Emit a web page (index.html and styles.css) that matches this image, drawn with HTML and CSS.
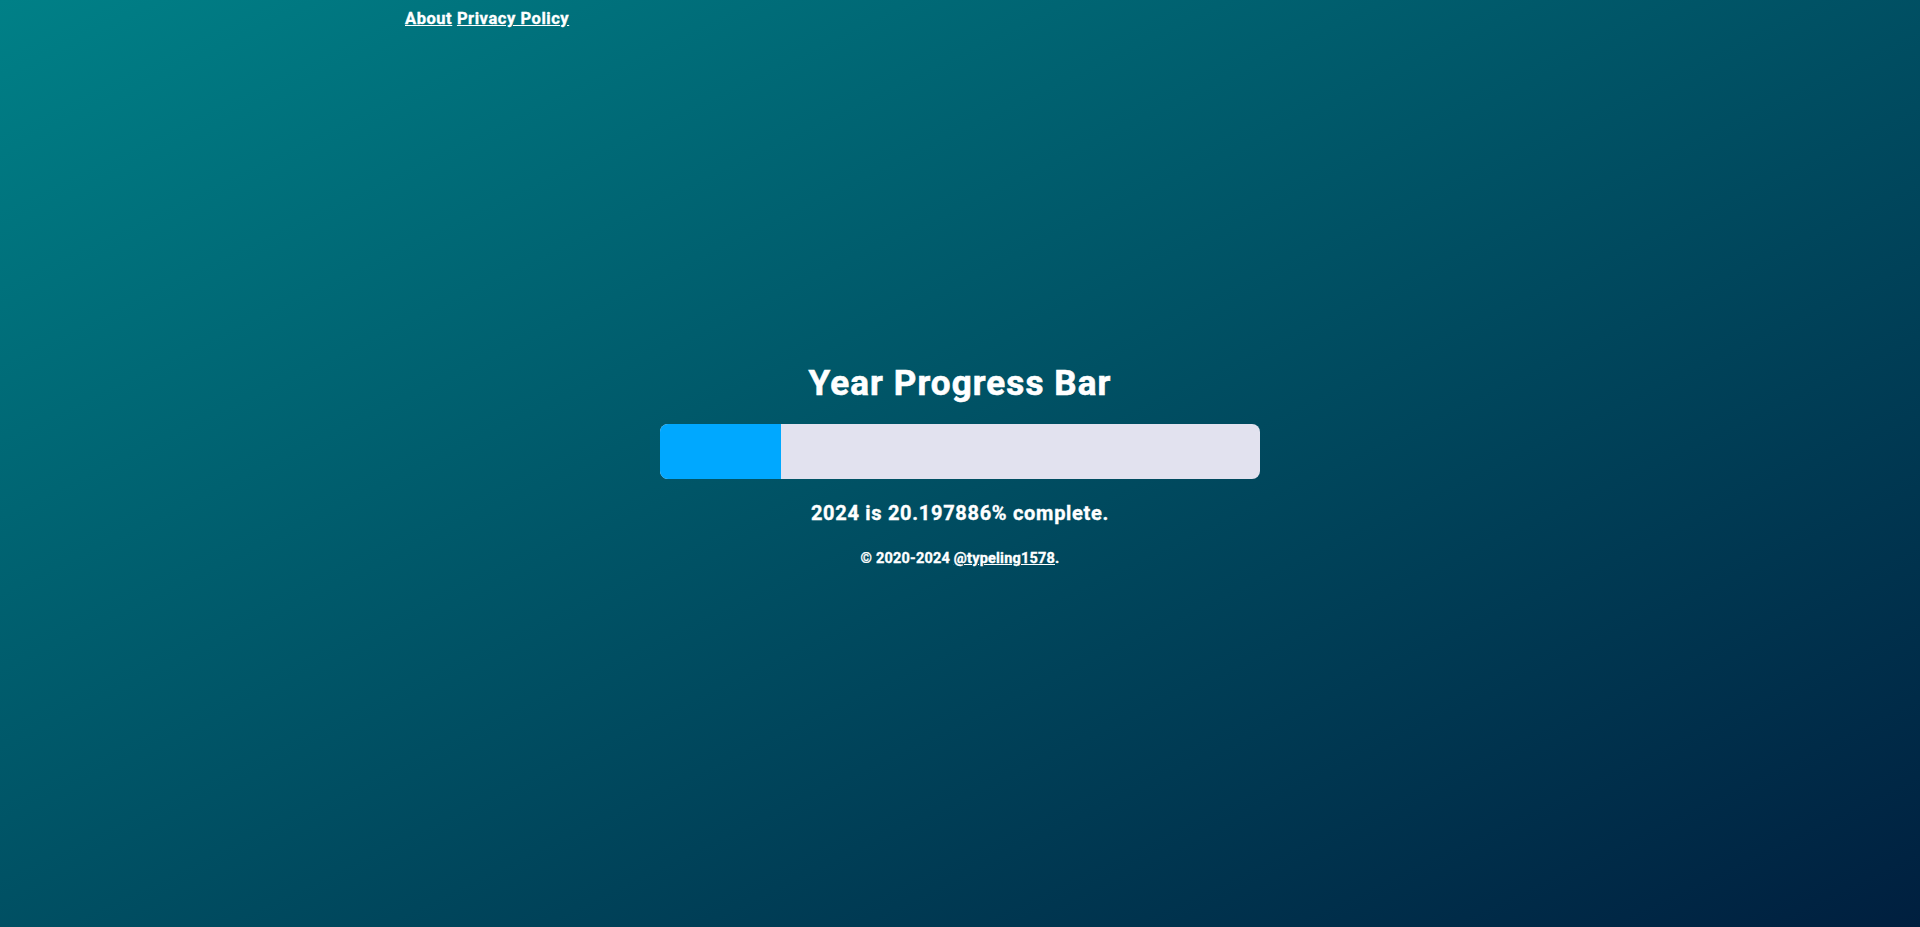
FILE: index.html
```html
<!DOCTYPE html>
<html lang="en">
<head>
<meta charset="utf-8">
<title>Year Progress Bar</title>
<link rel="stylesheet" href="styles.css">
</head>
<body>
<div class="page">
  <nav class="nav">
    <a href="#">About</a> <a href="#">Privacy Policy</a>
  </nav>
  <main class="main">
    <h1 class="title">Year Progress Bar</h1>
    <div class="track"><div class="fill" style="width: 20.197886%"></div></div>
    <p class="percent">2024 is 20.197886% complete.</p>
    <p class="copy">© 2020-2024 <a href="#">@typeling1578</a>.</p>
  </main>
</div>
</body>
</html>
```
FILE: styles.css
```css
html, body {
  margin: 0;
  height: 100%;
}
body {
  font-family: Roboto, "Liberation Sans", sans-serif;
  font-weight: 700;
  color: #fff;
  background: linear-gradient(to bottom right, #008087, #001f3f);
  -webkit-text-stroke: 0.35px #fff;
}
.page {
  display: grid;
  min-height: 100vh;
}
.nav, .main {
  grid-area: 1 / 1;
}
.nav {
  align-self: start;
  width: 1110px;
  margin: 0 auto;
  padding-top: 9px;
  font-size: 16.5px;
  letter-spacing: 0.55px;
}
.nav a, .copy a {
  color: #fff;
}
.main {
  display: flex;
  flex-direction: column;
  align-items: center;
  justify-content: center;
  padding-top: 3px;
}
.title {
  margin: 0 0 19px;
  font-size: 35px;
  font-weight: 700;
  line-height: 1.2;
  letter-spacing: 1.1px;
  -webkit-text-stroke: 0.6px #fff;
}
.track {
  width: 600px;
  height: 55px;
  background: #e2e2ef;
  border-radius: 8px;
  overflow: hidden;
}
.fill {
  height: 100%;
  background: #00a8ff;
}
.percent {
  margin: 22px 0 0;
  font-size: 20px;
  letter-spacing: 0.7px;
}
.copy {
  margin: 25px 0 0;
  font-size: 14.5px;
  letter-spacing: 0.2px;
}
```
